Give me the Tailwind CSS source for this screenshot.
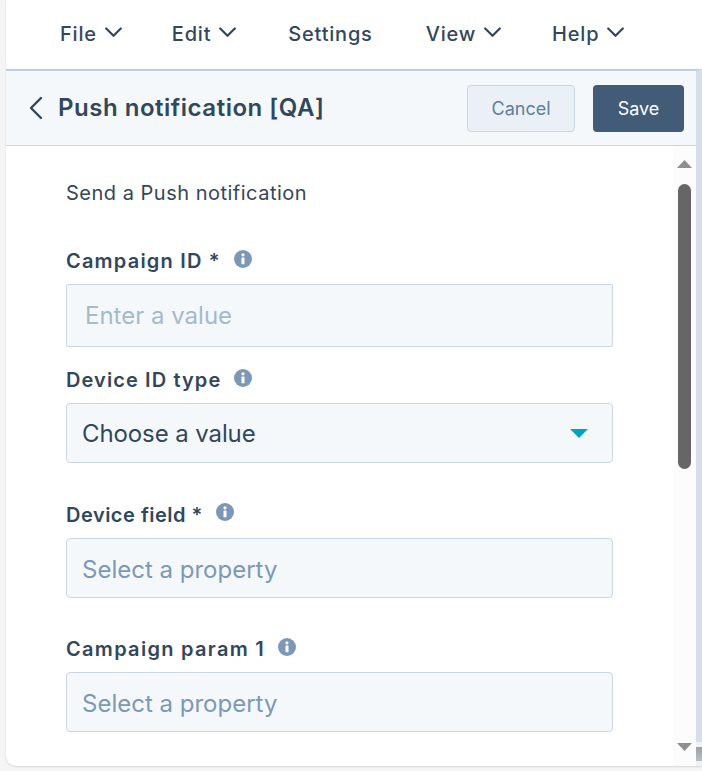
<!DOCTYPE html>
<html lang="en">
<head>
  <meta charset="UTF-8" />
  <title>Push notification</title>
  <script src="https://cdn.jsdelivr.net/npm/@tailwindcss/browser@4"></script>
</head>
<body class="relative bg-[#f5f5f5] font-['Inter',sans-serif] text-[#33475b] h-[771px] w-[702px] overflow-hidden">
  <div class="ml-[6px] w-[696px] h-[766px] bg-white flex flex-col rounded-bl-[10px] overflow-hidden shadow-[0_1px_2px_rgba(0,0,0,0.12)]">
    <!-- Menu -->
    <nav class="h-[69px] shrink-0 flex items-center pl-[54px] gap-[51px] text-[20px] font-medium tracking-[0.8px] pb-[2px] bg-white shadow-[inset_0_-8px_8px_-8px_rgba(0,0,0,0.05)]">
      <span class="flex items-center gap-[8px] -mr-[1px]">File
        <svg class="w-[17px] h-[11px] -mt-[3px]" viewBox="0 0 17 11" fill="none" stroke="#33475b" stroke-width="2.2" stroke-linecap="round" stroke-linejoin="round"><path d="M1.2 1.5l7.3 7.3 7.3-7.3"/></svg>
      </span>
      <span class="flex items-center gap-[8px] mr-[1px]">Edit
        <svg class="w-[17px] h-[11px] -mt-[3px]" viewBox="0 0 17 11" fill="none" stroke="#33475b" stroke-width="2.2" stroke-linecap="round" stroke-linejoin="round"><path d="M1.2 1.5l7.3 7.3 7.3-7.3"/></svg>
      </span>
      <span class="mr-[2px]">Settings</span>
      <span class="flex items-center gap-[8px]">View
        <svg class="w-[17px] h-[11px] -mt-[3px]" viewBox="0 0 17 11" fill="none" stroke="#33475b" stroke-width="2.2" stroke-linecap="round" stroke-linejoin="round"><path d="M1.2 1.5l7.3 7.3 7.3-7.3"/></svg>
      </span>
      <span class="flex items-center gap-[8px]">Help
        <svg class="w-[17px] h-[11px] -mt-[3px]" viewBox="0 0 17 11" fill="none" stroke="#33475b" stroke-width="2.2" stroke-linecap="round" stroke-linejoin="round"><path d="M1.2 1.5l7.3 7.3 7.3-7.3"/></svg>
      </span>
    </nav>

    <div class="flex-1 flex flex-col min-h-0 border-t-2 border-[#c0cedd] border-r-[6px] border-r-[#d5dee9]">
      <!-- Header -->
      <header class="h-[75px] shrink-0 bg-[#f5f8fa] border-b border-[#cbd6e2] flex items-center pl-[22px] pr-[12px]">
        <svg class="w-[16px] h-[26px] mr-[14px]" viewBox="0 0 16 26" fill="none" stroke="#33475b" stroke-width="2.4" stroke-linecap="round" stroke-linejoin="round"><path d="M13 3L3 13l10 10"/></svg>
        <h1 class="text-[24px] font-semibold tracking-[0.52px] whitespace-nowrap">Push notification [QA]</h1>
        <div class="ml-auto flex gap-[18px]">
          <button class="w-[108px] h-[47px] pt-[1px] rounded-[4px] bg-[#eaf0f6] border border-[#cbd6e2] text-[#5f7f9d] text-[18px]">Cancel</button>
          <button class="w-[91px] h-[47px] pt-[1px] rounded-[4px] bg-[#425b76] text-white text-[18px]">Save</button>
        </div>
      </header>

      <!-- Scroll area -->
      <div class="flex-1 flex min-h-0">
        <main class="flex-1 pl-[60px] pt-[34px] overflow-hidden">
          <p class="text-[20px] leading-[26px] tracking-[0.5px] mb-[42px]">Send a Push notification</p>

          <label class="flex items-center gap-[13px] text-[20px] font-semibold tracking-[1.2px] leading-[26px] mb-[10px]">Campaign ID *
            <svg class="w-[18px] h-[18px] -mt-[5px]" viewBox="0 0 18 18"><circle cx="9" cy="9" r="9" fill="#7c98b6"/><circle cx="9" cy="4.8" r="1.6" fill="#fff"/><rect x="7.5" y="7.6" width="3" height="6.6" rx="0.5" fill="#fff"/></svg>
          </label>
          <div class="w-[547px] h-[63px] pt-[1px] rounded-[2px] bg-[#f5f8fa] border border-[#cbd6e2] flex items-center pl-[18px] text-[24px] text-[#a5b9cf] mb-[20px]">Enter a value</div>

          <label class="flex items-center gap-[13px] text-[20px] font-semibold tracking-[1.1px] leading-[26px] mb-[10px]">Device ID type
            <svg class="w-[18px] h-[18px] -mt-[5px]" viewBox="0 0 18 18"><circle cx="9" cy="9" r="9" fill="#7c98b6"/><circle cx="9" cy="4.8" r="1.6" fill="#fff"/><rect x="7.5" y="7.6" width="3" height="6.6" rx="0.5" fill="#fff"/></svg>
          </label>
          <div class="w-[547px] h-[60px] pt-[1px] rounded-[4px] bg-[#f5f8fa] border border-[#cbd6e2] flex items-center justify-between pl-[15px] pr-[24px] text-[24px] tracking-[-0.1px] mb-[39px]">Choose a value
            <svg class="w-[18px] h-[9px]" viewBox="0 0 18 9"><path d="M0 0h18L9 9z" fill="#00a4bd"/></svg>
          </div>

          <label class="flex items-center gap-[13px] text-[20px] font-semibold tracking-[0.5px] leading-[26px] mb-[10px]">Device field *
            <svg class="w-[18px] h-[18px] -mt-[6px]" viewBox="0 0 18 18"><circle cx="9" cy="9" r="9" fill="#7c98b6"/><circle cx="9" cy="4.8" r="1.6" fill="#fff"/><rect x="7.5" y="7.6" width="3" height="6.6" rx="0.5" fill="#fff"/></svg>
          </label>
          <div class="w-[547px] h-[60px] pt-[3px] rounded-[4px] bg-[#f5f8fa] border border-[#cbd6e2] flex items-center pl-[15px] text-[24px] text-[#7c98b6] mb-[38px]">Select a property</div>

          <label class="flex items-center gap-[13px] text-[20px] font-semibold tracking-[1.3px] leading-[26px] mb-[10px]">Campaign param 1
            <svg class="w-[18px] h-[18px] -mt-[5px]" viewBox="0 0 18 18"><circle cx="9" cy="9" r="9" fill="#7c98b6"/><circle cx="9" cy="4.8" r="1.6" fill="#fff"/><rect x="7.5" y="7.6" width="3" height="6.6" rx="0.5" fill="#fff"/></svg>
          </label>
          <div class="w-[547px] h-[60px] pt-[3px] rounded-[4px] bg-[#f5f8fa] border border-[#cbd6e2] flex items-center pl-[15px] text-[24px] text-[#7c98b6]">Select a property</div>
        </main>

        <!-- Scrollbar -->
        <div class="w-[23px] shrink-0 bg-[#fcfcfc] flex flex-col items-center pt-[14px]">
          <svg class="w-[15px] h-[8px] shrink-0" viewBox="0 0 15 8"><path d="M7.5 0L15 8H0z" fill="#8f8f8f"/></svg>
          <div class="w-[13px] h-[285px] mt-[16px] rounded-full bg-[#666666]"></div>
          <svg class="w-[15px] h-[8px] shrink-0 mt-[274px]" viewBox="0 0 15 8"><path d="M0 0h15L7.5 8z" fill="#8f8f8f"/></svg>
        </div>
      </div>
    </div>
  </div>
  <!-- Window behind, showing at the right edge -->
  <div class="absolute left-[696px] top-[742px] w-[6px] h-[24px] bg-[#eef1f5]">
    <div class="mt-[5px] h-[14px] bg-gradient-to-b from-[#9aa0a6] to-[#b9bec4]"></div>
  </div>
</body>
</html>
